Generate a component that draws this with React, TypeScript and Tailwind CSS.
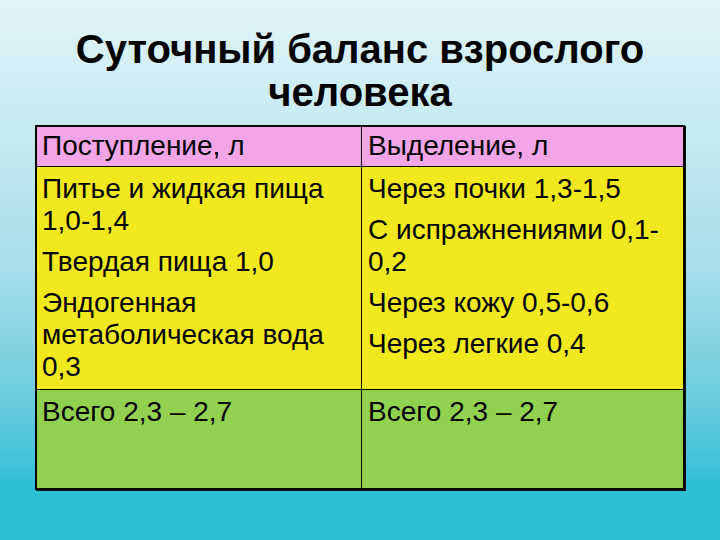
export default function App() {
  const font = { fontFamily: '"Liberation Sans", Arial, sans-serif' };

  return (
    <main
      className="w-[720px] h-[540px] overflow-hidden bg-gradient-to-b from-[#e2f5f9] via-[#a6deea] via-50% to-[#2cbfd6] to-90% pt-[28px]"
      style={font}
    >
      {/* Title */}
      <h1 className="text-center text-[40px] leading-[43px] font-bold text-black">
        Суточный баланс взрослого
        <br />
        человека
      </h1>

      {/* Table */}
      <div className="mx-auto mt-[11px] w-[650px] h-[365px] border-2 border-black shadow-[1px_1px_0_#111] grid grid-cols-[325px_1fr] grid-rows-[40px_223px_1fr] text-[28px] leading-[32px] text-black">
        <div className="bg-[#f2a6e7] border-r border-b border-black px-[5px] pt-[3px]">Поступление, л</div>
        <div className="bg-[#f2a6e7] border-b border-black px-[6px] pt-[3px]">Выделение, л</div>

        <div className="bg-[#f1e91e] border-r border-b border-black px-[5px] pt-[6px] flex flex-col gap-[9px]">
          <p>Питье и жидкая пища 1,0-1,4</p>
          <p>Твердая пища 1,0</p>
          <p>Эндогенная метаболическая вода 0,3</p>
        </div>
        <div className="bg-[#f1e91e] border-b border-black px-[6px] pt-[6px] flex flex-col gap-[9px]">
          <p>Через почки 1,3-1,5</p>
          <p>С испражнениями 0,1-0,2</p>
          <p>Через кожу 0,5-0,6</p>
          <p>Через легкие 0,4</p>
        </div>

        <div className="bg-[#92d150] border-r border-black px-[5px] pt-[6px]">Всего 2,3 – 2,7</div>
        <div className="bg-[#92d150] px-[6px] pt-[6px]">Всего 2,3 – 2,7</div>
      </div>
    </main>
  );
}
